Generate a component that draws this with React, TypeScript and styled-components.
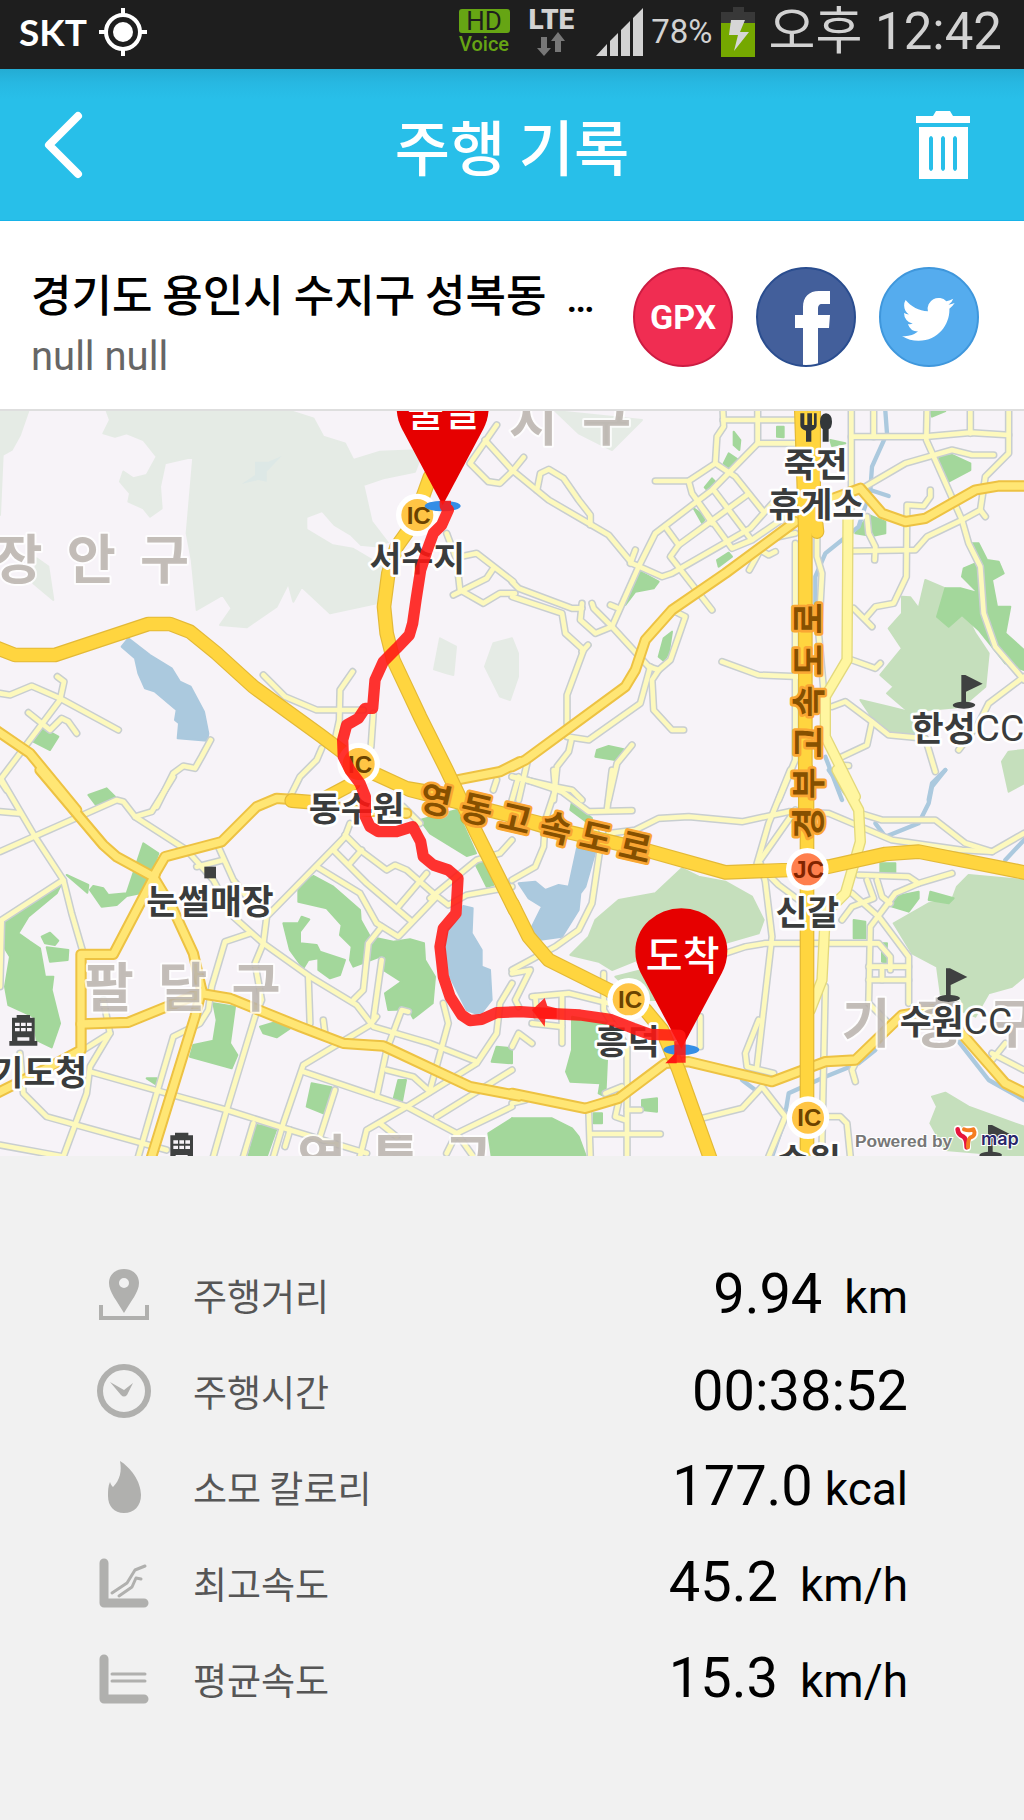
import React from "react";
import styled, { createGlobalStyle } from "styled-components";

const latin = `Roboto, "Noto Sans CJK KR", sans-serif`;
const korean = `"Noto Sans CJK KR", sans-serif`;

const GlobalStyle = createGlobalStyle`
  * { box-sizing: border-box; }
  body { margin: 0; background: #f1f1f1; font-family: ${latin}; }
  button { border: 0; padding: 0; background: none; cursor: pointer; font: inherit; }
`;

const Screen = styled.div`
  min-height: 100vh;
  display: flex;
  flex-direction: column;
`;

/* ---------- status bar ---------- */
const StatusBar = styled.div`
  height: 69px;
  padding: 0 22px 6px 19px;
  background: #1e1e1e;
  color: #d2d2d2;
  display: flex;
  align-items: center;
  justify-content: space-between;
`;
const StatusGroup = styled.div<{ $gap: number }>`
  display: flex;
  align-items: center;
  gap: ${(p) => p.$gap}px;
`;
const Carrier = styled.span`
  font: 700 37px/48px Lato, sans-serif;
  color: #fff;
`;
const HdVoice = styled.div`
  display: flex;
  flex-direction: column;
  align-items: center;
  width: 51px;
  margin-right: 11px;
`;
const HdBadge = styled.span`
  width: 100%;
  border-radius: 3px;
  background: #66a514;
  color: #1e1e1e;
  font: 400 26px/24px Roboto, sans-serif;
  text-align: center;
`;
const VoiceText = styled.span`
  font: 500 20px/22px Roboto, sans-serif;
  color: #66a514;
`;
const Network = styled.div`
  display: flex;
  flex-direction: column;
  align-items: center;
  margin-right: 14px;
  font: 900 28px/24px Roboto, sans-serif;
`;
const Percent = styled.span`
  font: 400 33px/48px Roboto, sans-serif;
`;
const Clock = styled.span`
  margin-left: 6px;
  font: 400 51px/56px ${latin};
  white-space: nowrap;
`;

/* ---------- header ---------- */
const Header = styled.header`
  height: 152px;
  padding: 0 54px 0 40px;
  display: grid;
  grid-template-columns: 68px 1fr 54px;
  align-items: center;
  background: linear-gradient(#24acd3, #27b8e2 14px, #28bfe9 30px);
  border-bottom: 1px solid #17b3e8;
`;
const Title = styled.h1`
  margin: 0;
  font: 500 60px/80px ${korean};
  color: #fff;
  text-align: center;
`;
const IconButton = styled.button`
  display: flex;
`;

/* ---------- trip info ---------- */
const Info = styled.section`
  padding: 42px 45px 26px 31px;
  display: flex;
  align-items: flex-start;
  justify-content: space-between;
  gap: 24px;
  background: #fff;
  border-bottom: 2px solid #dedede;
`;
const Place = styled.div`
  display: flex;
  flex-direction: column;
  gap: 8px;
`;
const Address = styled.h2`
  margin: 0;
  font: 500 44px/60px ${korean};
  color: #000;
  white-space: pre;
`;
const More = styled.span`
  font-family: Roboto, sans-serif;
  font-size: 40px;
  line-height: 0;
`;
const Subtitle = styled.p`
  margin: 0;
  font: 400 40px/52px Roboto, sans-serif;
  color: #666;
`;
const Shares = styled.div`
  display: flex;
  gap: 23px;
  padding-top: 4px;
`;
const ShareButton = styled.button<{ $fill: string; $edge: string }>`
  width: 100px;
  height: 100px;
  flex: none;
  border: 2px solid ${(p) => p.$edge};
  border-radius: 50%;
  overflow: hidden;
  background: ${(p) => p.$fill};
  color: #fff;
  font: 700 34px/40px Roboto, sans-serif;
`;
const ShareArt = styled.svg`
  display: block;
  width: 96px;
  height: 96px;
`;

/* ---------- map ---------- */
const MapView = styled.svg`
  display: block;
  width: 100%;
  height: auto;
  background: #f7f3f8;
`;
const PlaceText = styled.text`
  font: 700 104px ${korean};
  fill: #3a3c3c;
  stroke: #fff;
  stroke-width: 16px;
  stroke-linejoin: round;
  paint-order: stroke;
  text-anchor: middle;
`;
const CourseText = styled.tspan`
  font: 400 112px Roboto, sans-serif;
`;
const DistrictText = styled.text`
  font: 700 160px ${korean};
  fill: #b9b2ac;
  fill-opacity: 0.85;
  stroke: #fff;
  stroke-opacity: 0.8;
  stroke-width: 12px;
  stroke-linejoin: round;
  paint-order: stroke;
  text-anchor: middle;
  white-space: pre;
`;
const RoadText = styled.text`
  font: 700 104px ${korean};
  fill: #865000;
  stroke: #faa633;
  stroke-width: 16px;
  stroke-linejoin: round;
  paint-order: stroke;
  text-anchor: middle;
`;
const JunctionText = styled.text`
  font: 700 72px "Liberation Sans", sans-serif;
  text-anchor: middle;
`;
const PinText = styled.text`
  font: 500 120px ${korean};
  fill: #fff;
  text-anchor: middle;
`;
const CreditText = styled.text`
  font: 700 52px "Liberation Sans", sans-serif;
  fill: #777;
  stroke: #fff;
  stroke-width: 6px;
  paint-order: stroke;
`;
const BrandText = styled.text`
  font: 600 54px Inter, sans-serif;
  fill: #29266b;
  stroke: #fff;
  stroke-width: 6px;
  paint-order: stroke;
`;

/* ---------- stats ---------- */
const Stats = styled.dl`
  margin: 0;
  padding: 91px 116px 88px 96px;
  flex: 1;
`;
const StatRow = styled.div`
  height: 96px;
  display: grid;
  grid-template-columns: 56px 1fr auto;
  column-gap: 41px;
  align-items: center;
`;
const StatIcon = styled.svg`
  width: 56px;
  height: 56px;
  color: #b0b0ae;
`;
const StatLabel = styled.dt`
  font: 400 37px/56px ${korean};
  color: #565656;
`;
const StatValue = styled.dd`
  margin: 0;
  display: flex;
  align-items: baseline;
  font: 400 56px/64px Roboto, sans-serif;
  color: #000;
`;
const Unit = styled.span<{ $tight?: boolean }>`
  margin-left: ${(p) => (p.$tight ? 12 : 22)}px;
  font-size: 46px;
`;

/* The map is drawn in four tiles that share one scale. */
type Tile = "nw" | "ne" | "sw" | "se";
const tileShift: Record<Tile, string> = {
  nw: "translate(0 0)",
  ne: "translate(1536 0)",
  sw: "translate(0 1110)",
  se: "translate(1536 1110)",
};
type TileShapes = Partial<Record<Tile, string[]>>;
const tiles: Tile[] = ["nw", "ne", "sw", "se"];

const hills: TileShapes = {
  nw: [
    "0,33 85,33 60,105 35,150 8,165 0,345",
    "320,33 330,60 310,100 345,110 380,100 430,120 470,170 440,225 400,235 370,215 360,245 390,280 385,305 430,325 450,350 485,325 480,260 495,190 580,170 560,400 575,480 590,630 668,585 695,625 660,675 740,682 830,620 865,550 880,605 905,560 990,640 1130,610 1165,430 1115,365 1090,255 1150,235 1245,215 1270,150 1140,155 1060,180 1035,130 970,110 940,55 870,33",
    "110,475 145,500 160,600 100,550",
    "1320,715 1368,740 1360,825 1340,820 1302,808",
    "1536,715 1480,730 1455,800 1500,890 1530,900 1554,830 1554,760",
  ],
  ne: ["130,33 390,60 300,150 200,100"],
};
const plainGaps: TileShapes = {
  nw: ["925,355 965,340 1000,380 1050,410 1080,440 1125,445 1170,430 1145,490 1060,440 1000,430 925,385"],
};
const lightParks: TileShapes = {
  ne: [
    "1240,540 1300,565 1340,600 1390,700 1430,760 1420,860 1350,920 1190,935 1125,880 1145,860 1105,825 1170,745 1130,685 1170,640 1170,590 1195,592 1220,625",
    "1045,900 1130,920 1190,935 1260,950 1200,1005 1110,990 1075,945",
    "1536,1050 1490,1055 1470,1085 1490,1175 1536,1150",
  ],
  se: [
    "510,295 560,320 640,335 720,380 755,450 740,490 600,530 400,560 300,600 260,575 175,555 230,500 250,450 320,390 430,370",
    "1536,330 1370,315 1335,350 1320,390 1250,400 1145,460 1200,550 1275,590 1290,700 1390,740 1430,670 1500,650 1536,620",
    "1260,980 1300,968 1370,1010 1536,1070 1536,1160 1300,1140 1255,1060 1275,1010",
    "310,620 390,600 430,690 390,690",
  ],
};
const parks: TileShapes = {
  nw: ["130,985 175,1010 150,1050 100,1025"],
  ne: [
    "1300,565 1345,565 1400,580 1350,530 1355,505 1390,490 1380,430 1400,430 1425,480 1460,485 1475,520 1440,540 1455,620 1495,620 1480,700 1536,750 1536,810 1480,790 1400,690 1350,645 1310,680 1275,650",
    "1275,170 1320,165 1375,190 1375,210 1310,245",
    "1030,400 1070,345 1120,365 1120,400 1080,408",
    "385,515 440,545 425,565 370,575 340,615",
    "665,95 685,120 682,150 665,135",
    "795,80 815,80 815,112 795,110",
    "650,160 680,180 650,210 635,190",
    "600,235 615,250 590,275 578,262",
    "545,325 580,350 572,372",
    "615,480 650,458 660,470 620,500",
    "480,695 470,760 455,782 440,770 455,715",
    "255,1050 290,1038 335,1048 310,1080 250,1070",
    "1255,33 1300,33 1260,50",
    "955,120 1000,130 960,138",
  ],
  sw: [
    "265,75 320,55 345,80 290,108",
    "430,220 475,250 450,320 420,370 380,378 350,405 305,410 270,360 280,348 310,355 325,375 380,370 400,310",
    "200,315 265,345 262,368",
    "185,340 100,392 20,440 5,520 30,560 15,650 25,705 100,740 110,810 155,832 180,760 155,660 160,620 135,620 120,535 90,515 55,490 85,440 170,370",
    "125,500 150,488 175,512 165,525 135,520",
    "140,532 205,540 203,570 150,575",
    "895,345 940,318 1000,350 1080,420 1082,450 1110,500 1180,515 1230,508 1272,520 1275,570 1305,620 1298,700 1240,745 1225,718 1165,720 1155,670 1205,635 1150,600 1140,560 1060,590 1050,570 1055,530 1020,495 1025,465 980,415 895,395",
    "850,460 895,460 905,440 928,448 900,485 900,520 950,525 960,545 1035,570 1020,615 990,625 955,600 955,565 925,570 910,595 870,540",
    "640,700 705,710 690,820 712,855 695,895 570,860 580,825 640,812 650,750",
    "780,770 830,755 870,775 830,802 790,790",
    "935,940 995,952 970,1030 920,1010",
    "770,1065 830,1075 800,1160 745,1160",
    "1195,930 1218,930 1205,1000 1180,990",
    "1490,830 1536,835 1536,880 1475,875",
    "1260,150 1370,120 1428,250 1400,258 1290,190",
    "1425,280 1450,270 1480,345 1460,350",
    "1536,1045 1465,1090 1475,1160 1536,1160",
    "440,925 470,925 470,945",
  ],
  se: [
    "180,740 290,760 280,980 260,970 265,940 175,935 162,905 180,840",
    "0,1045 120,1045 180,1075 200,1100 222,1160 0,1160",
    "390,990 435,985 435,1025 390,1020",
    "1145,380 1220,365 1220,385 1190,425 1140,410",
    "1255,365 1325,385 1310,400 1250,390",
    "1105,280 1150,280 1150,308 1105,305",
    "1025,450 1060,455 1060,505 1025,505",
    "180,95 240,145 230,160 175,120",
    "245,1030 270,1030 270,1060 245,1060",
    "1110,520 1125,520 1122,580 1110,575",
  ],
};
const lakes: TileShapes = {
  nw: ["385,715 365,740 405,775 415,820 435,865 465,875 530,930 525,960 537,970 533,1015 622,1022 625,1000 612,935 572,860 540,845 515,805 450,765"],
  sw: ["1390,408 1418,415 1415,490 1445,540 1445,590 1470,600 1475,690 1440,735 1400,720 1350,620 1335,530 1345,480 1385,440"],
  se: ["195,235 250,245 220,350 205,370 200,420 150,500 80,510 60,470 90,410 50,385 20,340 70,335 100,360 140,345 170,350"],
};
const rivers: TileShapes = {
  ne: [
    "1120,33 1125,100 1080,200 1075,270 1040,380 940,460 910,530 910,620",
    "1075,270 1130,288",
    "940,1070 990,1200",
    "1300,1110 1260,1150 1250,1200",
  ],
  se: [
    "1300,0 1260,50 1250,100 1220,160 1120,200 1090,160",
    "1480,270 1536,210",
    "1090,840 1040,880 940,920 830,970 815,1060 780,1160",
    "690,930 730,960",
    "1340,815 1430,930 1536,990",
    "950,0 1000,70",
  ],
};
const streets: TileShapes = {
  nw: [
    "172,830 192,845 180,900 0,1140 20,1170",
    "0,880 30,885 95,858 180,895 355,990",
    "85,938 150,990 185,955 205,965 230,1000",
    "632,1020 605,1070 585,1105 550,1098 520,1120 470,1220",
    "790,825 855,890 950,930 1090,930",
    "1058,815 1020,870 1018,960 1005,1020",
    "1120,940 1113,1040",
    "965,1045 950,1080 900,1130 870,1190",
    "1490,75 1410,190 1465,245 1500,250 1536,215",
    "1455,120 1536,210",
    "1340,400 1370,480 1380,570 1450,610 1500,580 1545,580",
    "1380,470 1430,460 1540,545",
    "1360,585 1460,535 1480,505",
  ],
  ne: [
    "0,215 35,172",
    "0,210 110,300 230,370 290,405 360,490 450,530 480,520 715,385 790,300",
    "75,270 85,220 110,208 155,235 200,300 235,345 235,375",
    "430,243 530,243 610,190 615,110 635,80 633,33",
    "633,60 850,60",
    "737,33 737,130 850,130",
    "737,130 600,270 430,400 380,500 300,680 250,700 205,660 210,610",
    "370,450 355,490",
    "530,243 540,280 660,445 720,420 850,330",
    "610,190 670,230 750,330",
    "605,270 715,415",
    "500,435 705,285",
    "560,310 600,370",
    "460,380 500,435 475,470 600,630",
    "850,400 780,415 745,450 712,510",
    "745,450 770,465 790,455",
    "0,545 20,565 180,625 210,625",
    "0,590 150,640 160,700 215,750 165,885 165,970",
    "228,735 210,755",
    "240,610 245,625 300,680 410,800 440,810 475,780 520,650 490,635",
    "415,800 385,910 230,1020 165,1010",
    "440,810 420,840 425,930 480,990 515,990",
    "178,1020 170,1055 135,1100 125,1200",
    "360,1035 315,1090 290,1200",
    "0,1130 130,1160 180,1170 210,1200",
    "45,1090 20,1200",
    "0,1200 20,1130",
    "630,785 740,825 860,830",
    "295,615 320,625",
    "1018,33 1018,350",
    "1018,110 1240,110 1375,98 1490,105",
    "1085,33 1085,110",
    "1245,33 1243,120 1350,360 1370,430 1405,500 1415,640 1450,740 1536,840",
    "1375,33 1375,100",
    "1490,33 1490,160 1420,230 1405,330 1350,360 1245,410 1210,450 1025,453",
    "1060,260 1180,190 1320,150 1380,165 1445,165",
    "1255,270 1255,290 1235,318 1185,315 1183,530 1145,610 1090,620 1060,655",
    "1025,625 1080,680",
    "1065,350 1070,400 1090,440 1088,480",
    "1405,330 1420,350",
    "1020,780 1090,805 1105,790",
    "960,920 1000,905 1080,965 1130,1005 1240,1015 1270,1115",
    "1080,965 1065,1035 980,1075",
    "1536,830 1430,910 1400,970 1340,1050",
    "850,430 850,1080 800,1200",
    "915,410 915,470 930,520 920,700 935,870",
    "980,1095 1010,1097",
  ],
  sw: [
    "5,30 105,200 190,330 215,430 250,550",
    "0,245 350,90 370,95 405,140 560,240 640,330 700,440 790,520 930,620 1070,705 1120,770 1290,820 1430,875",
    "405,140 455,125 520,20",
    "0,125 60,130",
    "0,650 5,450 190,330",
    "655,230 700,330 740,380",
    "590,290 670,270",
    "1050,160 1035,200 800,440 790,520 765,580 785,690 765,740 680,1020 640,1160",
    "750,490 675,515 635,650 625,720 600,760 520,800 470,970 415,1160",
    "1035,195 1080,240 1160,300 1185,285 1220,300 1300,370 1345,405 1400,375 1536,350",
    "1000,240 1100,340 1230,450",
    "950,290 1080,370 1130,460 1195,500 1310,380",
    "1035,200 1000,240",
    "1085,240 1050,280",
    "1280,310 1195,410",
    "1290,385 1430,270 1500,250 1536,210",
    "1145,470 1105,520 1090,660 1060,690",
    "1145,570 1120,750",
    "1130,740 1110,765 910,885 850,1060 820,1160",
    "910,905 1220,1010 1370,1090 1420,1160",
    "925,620 930,760",
    "970,750 975,790",
    "1330,700 1345,760 1290,960",
    "1225,725 1205,720 1160,840 1130,980",
    "1536,640 1500,700 1490,790 1430,880 1220,1010 1100,1080 1080,1160",
    "270,905 500,970 680,1020 870,1080 1100,1150",
    "330,790 270,890 260,970 190,1160",
    "60,850 70,970 140,1040 500,1140",
    "0,1125 190,1160",
    "1005,960 960,1100",
    "1536,1010 1370,1090 1340,1150",
    "1310,1040 1536,900",
    "760,1060 730,1160",
    "1160,900 1240,920 1290,965",
    "310,690 330,790 250,840",
    "870,1080 855,1130",
    "1140,1060 1190,1100",
    "1210,110 1260,160",
    "1480,60 1490,30",
  ],
  se: [
    "835,0 770,160 735,280 800,345 860,390",
    "125,0 130,60 100,150 95,230 70,290 0,330",
    "0,20 45,30 150,65 230,125 360,122",
    "300,0 285,120",
    "250,180 265,230 240,400 200,480 130,530 0,600",
    "290,190 370,180 440,145 530,140 690,155 830,125 950,130 1140,210 1350,240 1440,245 1536,190",
    "745,270 850,120",
    "1045,130 1110,150 1270,150 1360,220 1440,245",
    "745,280 760,335 780,500 735,890",
    "640,550 700,530 760,520 1100,520 1135,560 1135,600",
    "1040,315 1190,320 1220,340 1320,310",
    "1220,340 1150,370 1075,470 1070,700 1130,760",
    "1020,370 1100,440 1190,560 1190,700",
    "1065,330 1085,385 1020,410 990,450",
    "1095,330 1110,380 1135,400",
    "1070,590 1190,590",
    "1070,630 1190,630",
    "1110,590 1110,630",
    "940,650 930,1120",
    "740,750 700,850 705,890 785,910",
    "570,1045 690,1015 750,950 820,1040 770,1160",
    "950,1040 985,1040 1005,1060 1015,1160",
    "1030,880 1020,900 1030,935",
    "0,610 55,600 10,690 20,710",
    "60,680 170,670 290,700",
    "70,680 75,740",
    "150,680 150,820",
    "60,760 150,770",
    "0,830 20,790 60,820",
    "275,610 275,720 345,830 345,1160",
    "345,1020 385,1020",
    "280,970 330,950 310,1040 340,1050",
    "230,1020 235,1160",
    "235,1092 445,1092",
    "565,740 565,830",
    "1480,820 1440,870",
    "1440,850 1536,900",
    "0,1000 40,990",
  ],
};
const boulevards: TileShapes = {
  ne: ["1008,350 1005,780 940,890 940,1010 1030,1190"],
  se: ["975,0 1040,120 1045,215 1000,370 940,430 930,630 895,720"],
};
const mainRoads: TileShapes = {
  nw: ["-20,985 90,1060 230,1230", "1370,1140 1500,1115 1560,1085"],
  ne: [
    "0,1100 40,1080 340,860 370,810 400,720 480,630 640,520 850,365",
    "950,300 1045,265 1110,340 1180,365 1240,355 1390,270 1460,258 1560,258",
  ],
  sw: [
    "120,0 310,225 350,260 460,320 520,420 580,550 605,660",
    "460,320 495,260 665,215 770,110 830,85 900,90 1060,120 1220,130",
    "465,315 340,553 243,553 243,840 150,890 -20,975",
    "243,762 385,757 500,710 600,670 690,685 900,770 1030,820 1150,828 1410,950 1556,978",
    "605,660 585,740 455,1160",
  ],
  se: ["0,970 220,1015 320,985 460,880 530,875 780,935 940,875 1030,870 1170,735 1260,720 1340,780 1480,940 1560,980"],
};
const highways: TileShapes = {
  nw: [
    "-20,740 45,765 165,765 445,672 510,672 570,695 650,760 760,860 960,1005 1100,1110 1220,1165 1340,1185",
    "1290,230 1240,370 1190,440 1165,520 1152,620 1160,700 1180,780 1260,950 1340,1110 1430,1300 1545,1530",
  ],
  ne: ["905,33 905,300 915,395", "868,33 880,400 880,1230"],
  sw: ["875,92 950,98 1060,40", "1230,60 1536,138 1640,165"],
  se: [
    "0,140 100,170 400,240 640,307 830,300 950,290 1120,252 1220,245 1560,312",
    "0,400 50,500 110,570 290,660 400,720 450,780 500,900 600,1180",
    "885,0 885,240",
    "885,330 885,1180",
  ],
};

function Areas({ shapes, color }: { shapes: TileShapes; color: string }) {
  return (
    <g fill={color} stroke={color} strokeWidth="6" strokeLinejoin="round">
      {tiles.map((t) => (
        <g key={t} transform={tileShift[t]}>
          {(shapes[t] || []).map((points) => <polygon key={points} points={points} />)}
        </g>
      ))}
    </g>
  );
}

function Lines({ shapes, color, width }: { shapes: TileShapes; color: string; width: number }) {
  return (
    <g fill="none" stroke={color} strokeWidth={width} strokeLinejoin="round" strokeLinecap="round">
      {tiles.map((t) => (
        <g key={t} transform={tileShift[t]}>
          {(shapes[t] || []).map((points) => <polyline key={points} points={points} />)}
        </g>
      ))}
    </g>
  );
}

function Junction({ x, y, kind = "IC" }: { x: number; y: number; kind?: "IC" | "JC" }) {
  const jc = kind === "JC";
  return (
    <g>
      <circle cx={x} cy={y} r="64" fill="#fff" />
      <circle cx={x} cy={y} r="48" fill={jc ? "#ff7f4d" : "#ffc545"} />
      <JunctionText x={x + 4} y={y + 26} fill={jc ? "#812400" : "#6b4300"}>{kind}</JunctionText>
    </g>
  );
}

function GolfFlag({ x, y }: { x: number; y: number }) {
  return (
    <g transform={`translate(${x} ${y})`} fill="#3f4141">
      <path d="M-8 0H4L56 26L6 50V80Q34 82 34 90Q30 100 0 101Q-34 100 -34 90Q-32 82 -8 80Z" />
    </g>
  );
}

function CityHall({ x, y }: { x: number; y: number }) {
  return (
    <g transform={`translate(${x} ${y})`}>
      <path fill="#3f4141" d="M-20 0H20V8H34V78H42V92H-42V78H-34V8H-20Z" />
      <path stroke="#f7f3f8" strokeWidth="10" d="M-25 28H-11M-7 28H7M11 28H25M-25 44H-11M-7 44H7M11 44H25M-18 72H18" />
    </g>
  );
}

function Pin({ x, y, label }: { x: number; y: number; label: string }) {
  return (
    <g transform={`translate(${x} ${y})`}>
      <ellipse cx="0" cy="6" rx="54" ry="16" fill="#348ee6" />
      <path fill="#e60000" d="M0 4L-122 -225C-132 -245 -138 -265 -138 -290A138 128 0 0 1 138 -290C138 -265 132 -245 122 -225Z" />
      <PinText x="4" y="-234">{label}</PinText>
    </g>
  );
}

const expressEast = [
  ["경", 1270], ["부", 1150], ["고", 1028], ["속", 904], ["도", 780], ["로", 656],
] as const;
const expressSouth = [
  ["영", 1308, 1200], ["동", 1430, 1228], ["고", 1546, 1256],
  ["속", 1668, 1284], ["도", 1788, 1312], ["로", 1906, 1342],
] as const;

function RouteMap() {
  return (
    <MapView viewBox="0 33 3072 2235" role="img" aria-label="주행 경로 지도">
      <Areas shapes={hills} color="#e5ebe5" />
      <Areas shapes={plainGaps} color="#f7f3f8" />
      <path fill="#dde8e6" d="M845 168L805 185L765 185L765 225L725 252L775 240L800 245L800 215Z" />
      <Areas shapes={lightParks} color="#c5dfbc" />
      <Areas shapes={parks} color="#a3d79b" />
      <Areas shapes={lakes} color="#abc9de" />
      <Lines shapes={rivers} color="#abc9de" width={13} />
      <Lines shapes={streets} color="#c8ced0" width={23} />
      <Lines shapes={streets} color="#fdf9bd" width={14} />
      <Lines shapes={boulevards} color="#e3d97c" width={34} />
      <Lines shapes={boulevards} color="#fff6a0" width={26} />
      <Lines shapes={mainRoads} color="#edc243" width={34} />
      <Lines shapes={mainRoads} color="#ffe674" width={22} />
      <Lines shapes={highways} color="#e3b937" width={44} />
      <Lines shapes={highways} color="#ffd53f" width={37} />

      <DistrictText x="274" y="538">{"장\u00a0\u00a0안\u00a0\u00a0구"}</DistrictText>
      <DistrictText x="1710" y="124">{"지\u00a0\u00a0구"}</DistrictText>
      <DistrictText x="548" y="1822">{"팔\u00a0\u00a0달\u00a0\u00a0구"}</DistrictText>
      <DistrictText x="1185" y="2336">{"영\u00a0\u00a0통\u00a0\u00a0구"}</DistrictText>
      <DistrictText x="2818" y="1930">{"기\u00a0\u00a0흥\u00a0\u00a0구"}</DistrictText>

      {expressEast.map(([ch, y]) => (
        <RoadText key={ch} transform={`translate(2424 ${y}) rotate(-90)`} x="0" y="38">{ch}</RoadText>
      ))}
      {expressSouth.map(([ch, x, y]) => (
        <RoadText key={ch} transform={`translate(${x} ${y}) rotate(13)`} x="0" y="38">{ch}</RoadText>
      ))}

      <Junction x={1252} y={345} />
      <Junction x={1076} y={1092} />
      <Junction x={1886} y={1798} />
      <Junction x={2424} y={2153} />
      <Junction x={2422} y={1408} kind="JC" />

      <path fill="#33373a" d="M2401 40V75Q2401 88 2418 92V125H2434V92Q2450 88 2450 75V40H2442V75H2436V40H2422V75H2413V40ZM2478 40Q2496 42 2496 65Q2496 82 2486 88V125H2468V88Q2460 82 2460 65Q2460 42 2478 40Z" />
      <rect x="613" y="1400" width="35" height="35" fill="#3f4141" />
      <CityHall x={70} y={1845} />
      <CityHall x={545} y={2198} />
      <GolfFlag x={2892} y={825} />
      <GolfFlag x={2846} y={1705} />
      <GolfFlag x={2972} y={2175} />

      <PlaceText x="1252" y="514">서수지</PlaceText>
      <PlaceText x="1070" y="1262">동수원</PlaceText>
      <PlaceText x="630" y="1541">눈썰매장</PlaceText>
      <PlaceText x="118" y="2054">기도청</PlaceText>
      <PlaceText x="2447" y="230">죽전</PlaceText>
      <PlaceText x="2449" y="350">휴게소</PlaceText>
      <PlaceText x="2904" y="1022">한성<CourseText>CC</CourseText></PlaceText>
      <PlaceText x="2868" y="1903">수원<CourseText>CC</CourseText></PlaceText>
      <PlaceText x="2422" y="1575">신갈</PlaceText>
      <PlaceText x="1883" y="1963">흥덕</PlaceText>
      <PlaceText x="2426" y="2318">수원</PlaceText>

      <Pin x={1328} y={312} label="출발" />
      <Pin x={2044} y={1943} label="도착" />

      <g fill="none" stroke="#ff1712" strokeOpacity="0.88" strokeWidth="34" strokeLinejoin="round">
        <path d="M1336 302V318L1345 330L1325 375L1300 400L1280 455L1262 510L1248 600L1238 670L1228 705L1190 745L1150 785L1125 840L1118 925L1095 925L1075 955L1040 975L1028 1020L1030 1070L1050 1110L1080 1150L1096 1190V1250L1110 1280L1135 1295H1190L1238 1280L1262 1325L1270 1370L1300 1395L1345 1410L1374 1435L1368 1540L1330 1585L1320 1640L1330 1730L1350 1790L1385 1845L1410 1862L1445 1858L1490 1838L1560 1835L1640 1840L1740 1845L1830 1858L1900 1885L1950 1903L2040 1906V1988" />
      </g>
      <path fill="#ff1712" fillOpacity="0.88" d="M1596 1830L1634 1794L1642 1818L1670 1825V1855L1636 1856L1634 1880Z" />
      <path fill="#ff1712" d="M1996 1990L2030 1955V1990Z" />

      <CreditText x="2565" y="2240">Powered by</CreditText>
      <g fill="none" strokeLinecap="round" strokeLinejoin="round">
        <path stroke="#fff" strokeWidth="24" d="M2874 2188Q2876 2204 2892 2210Q2901 2216 2901 2242M2896 2190H2920Q2930 2208 2904 2214" />
        <path stroke="#e6163c" strokeWidth="14" d="M2873 2188Q2874 2204 2890 2210Q2900 2216 2900 2242" />
        <path stroke="#f57d20" strokeWidth="12" d="M2892 2188Q2908 2194 2920 2188Q2930 2206 2912 2212Q2904 2216 2904 2242" />
      </g>
      <BrandText x="2943" y="2236">map</BrandText>
    </MapView>
  );
}

const stats: { label: string; value: string; unit?: string; tight?: boolean; icon: React.ReactNode }[] = [
  {
    label: "주행거리", value: "9.94", unit: "km",
    icon: (
      <>
        <path fill="currentColor" fillRule="evenodd" d="M28 2C19 2 13 8 13 16C13 25 21 34 28 46C35 34 43 25 43 16C43 8 37 2 28 2ZM28 11A5 5 0 1 1 28 21A5 5 0 1 1 28 11Z" />
        <path fill="none" stroke="currentColor" strokeWidth="4" d="M5 38V51H51V38" />
      </>
    ),
  },
  {
    label: "주행시간", value: "00:38:52",
    icon: (
      <>
        <circle cx="28" cy="28" r="24" fill="none" stroke="currentColor" strokeWidth="6" />
        <path fill="currentColor" d="M14 19L28 27L37 20L31 32Q28 35 25 32Z" />
      </>
    ),
  },
  {
    label: "소모 칼로리", value: "177.0", unit: "kcal", tight: true,
    icon: <path fill="currentColor" d="M24 2C34 8 45 22 45 36C45 47 38 54 28 54C18 54 12 47 12 37C12 32 12 27 14 23C15 26 16 27 17 28C24 21 26 12 24 2Z" />,
  },
  {
    label: "최고속도", value: "45.2", unit: "km/h",
    icon: (
      <g fill="none" stroke="currentColor" strokeLinecap="round" strokeLinejoin="round">
        <path strokeWidth="9" d="M8 8V48H48" />
        <path strokeWidth="3" d="M16 38L31 28L39 15L49 11M23 41L36 32L40 23L45 24" />
      </g>
    ),
  },
  {
    label: "평균속도", value: "15.3", unit: "km/h",
    icon: (
      <g fill="none" stroke="currentColor" strokeLinecap="round" strokeLinejoin="round">
        <path strokeWidth="9" d="M8 8V48H48" />
        <path strokeWidth="3" d="M16 23H49M16 30H49" />
      </g>
    ),
  },
];

export default function App() {
  return (
    <Screen>
      <GlobalStyle />
      <StatusBar>
        <StatusGroup $gap={12}>
          <Carrier>SKT</Carrier>
          <svg width="48" height="48" viewBox="0 0 48 48" fill="none" stroke="#fff" aria-hidden="true">
            <circle cx="24" cy="24" r="17" strokeWidth="4" />
            <circle cx="24" cy="24" r="10" fill="#fff" stroke="none" />
            <path strokeWidth="4" d="M24 0V7M24 41V48M0 24H7M41 24H48" />
          </svg>
        </StatusGroup>
        <StatusGroup $gap={8}>
          <HdVoice>
            <HdBadge>HD</HdBadge>
            <VoiceText>Voice</VoiceText>
          </HdVoice>
          <Network>
            LTE
            <svg width="28" height="24" viewBox="0 0 28 24" fill="#777" aria-hidden="true">
              <path d="M4 5H10V16H14L7 24L0 16H4ZM18 20H24V9H28L21 0L14 9H18Z" />
            </svg>
          </Network>
          <svg width="47" height="48" viewBox="0 0 47 48" fill="#d2d2d2" aria-hidden="true">
            <path d="M0 48L11 36V48ZM14 48V33L22 25V48ZM25 48V22L34 13V48ZM37 48V10L47 0V48Z" />
          </svg>
          <Percent>78%</Percent>
          <svg width="34" height="50" viewBox="0 0 34 50" aria-hidden="true">
            <path fill="#383838" d="M12 0H23V5H34V17H0V5H12Z" />
            <path fill="#75a800" d="M0 16H34V50H0Z" />
            <path fill="#d6d6d6" d="M10 13H24L19 25H28L13 44L17 28H8Z" />
          </svg>
          <Clock>오후 12:42</Clock>
        </StatusGroup>
      </StatusBar>

      <Header>
        <IconButton aria-label="뒤로">
          <svg width="48" height="68" viewBox="0 0 48 68" fill="none" stroke="#fff" strokeWidth="8" strokeLinecap="round" strokeLinejoin="round">
            <path d="M38 5L9 34L38 63" />
          </svg>
        </IconButton>
        <Title>주행 기록</Title>
        <IconButton aria-label="삭제">
          <svg width="54" height="68" viewBox="0 0 54 68">
            <path fill="#fff" fillRule="evenodd" d="M0 5H17L20 0H34L37 5H54V12H0ZM3 16H52V68H3ZM13 27V58Q15 62 17 58V27Q15 23 13 27ZM25 27V58Q27 62 29 58V27Q27 23 25 27ZM37 27V58Q39 62 41 58V27Q39 23 37 27Z" />
          </svg>
        </IconButton>
      </Header>

      <Info>
        <Place>
          <Address>{"경기도 용인시 수지구 성복동  "}<More>…</More></Address>
          <Subtitle>null null</Subtitle>
        </Place>
        <Shares>
          <ShareButton $fill="#f02d52" $edge="#cc1c42">GPX</ShareButton>
          <ShareButton $fill="#435f9b" $edge="#2a4d8f" aria-label="Facebook">
            <ShareArt viewBox="0 0 96 96">
              <path fill="#fff" d="M45 97V59H37V46H45V38C45 28 51 22 61 22H72V35H64C61 35 60 37 60 40V46H72L71 59H60V97Z" />
            </ShareArt>
          </ShareButton>
          <ShareButton $fill="#55acee" $edge="#3f97dc" aria-label="Twitter">
            <ShareArt viewBox="0 0 96 96">
              <g transform="translate(21 24) scale(2.2)">
                <path fill="#fff" d="M23.95 4.57a10 10 0 0 1-2.82.77 4.96 4.96 0 0 0 2.16-2.72c-.95.55-2 .96-3.13 1.18a4.92 4.92 0 0 0-8.38 4.48C7.69 8.1 4.07 6.13 1.64 3.16a4.82 4.82 0 0 0-.67 2.48c0 1.71.87 3.21 2.19 4.1a4.9 4.9 0 0 1-2.23-.62v.06a4.92 4.92 0 0 0 3.95 4.83 5 5 0 0 1-2.21.08 4.94 4.94 0 0 0 4.6 3.42A9.87 9.87 0 0 1 0 19.54a14 14 0 0 0 7.55 2.21c9.05 0 14-7.5 14-13.98 0-.21 0-.42-.02-.63a9.94 9.94 0 0 0 2.42-2.57z" />
              </g>
            </ShareArt>
          </ShareButton>
        </Shares>
      </Info>

      <RouteMap />

      <Stats>
        {stats.map((s) => (
          <StatRow key={s.label}>
            <StatIcon viewBox="0 0 56 56" aria-hidden="true">{s.icon}</StatIcon>
            <StatLabel>{s.label}</StatLabel>
            <StatValue>
              {s.value}
              {s.unit && <Unit $tight={s.tight}>{s.unit}</Unit>}
            </StatValue>
          </StatRow>
        ))}
      </Stats>
    </Screen>
  );
}
